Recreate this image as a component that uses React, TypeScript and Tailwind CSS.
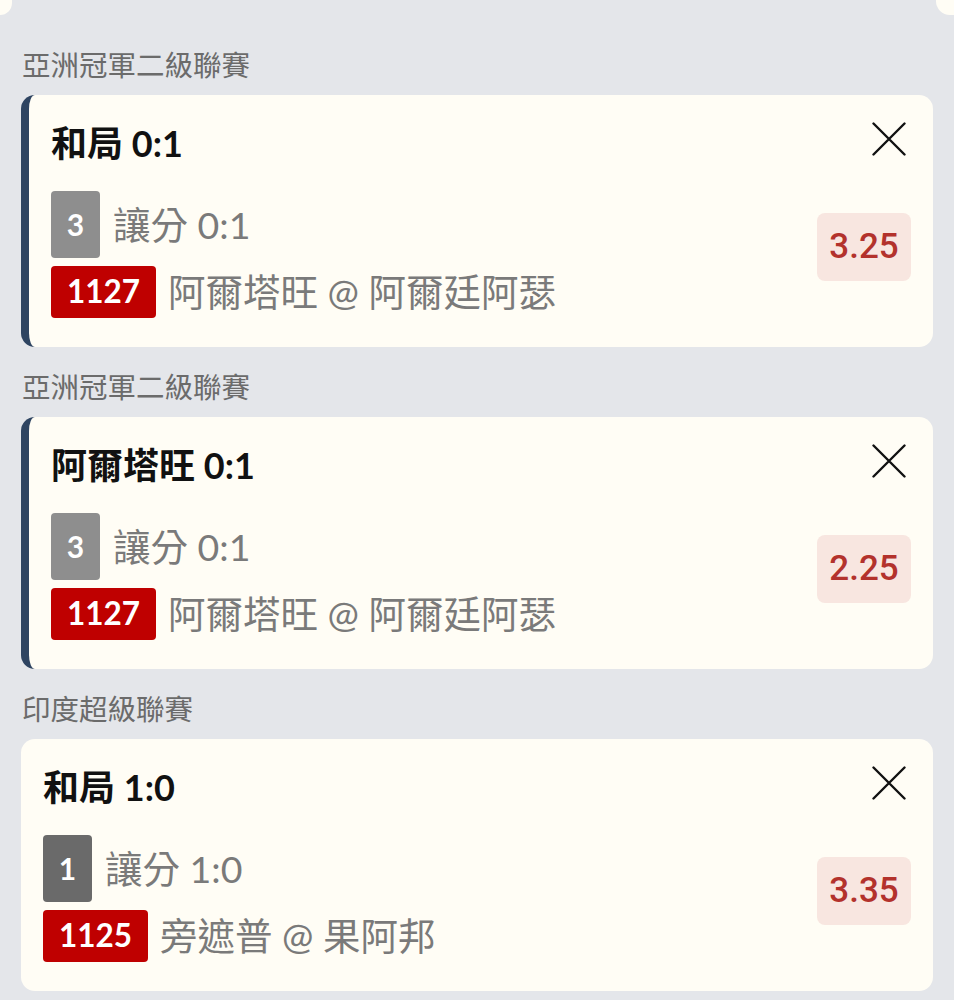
const cjk = { fontFamily: 'Lato, "Noto Sans CJK TC", sans-serif' };
const num = { fontFamily: 'Roboto, "Noto Sans CJK TC", sans-serif' };

type Bet = {
  league: string;
  title: string;
  seq: string;
  seqDark?: boolean;
  handicap: string;
  code: string;
  match: string;
  odds: string;
  active?: boolean;
};

const bets: Bet[] = [
  {
    league: "亞洲冠軍二級聯賽",
    title: "和局 0:1",
    seq: "3",
    handicap: "讓分 0:1",
    code: "1127",
    match: "阿爾塔旺 @ 阿爾廷阿瑟",
    odds: "3.25",
    active: true,
  },
  {
    league: "亞洲冠軍二級聯賽",
    title: "阿爾塔旺 0:1",
    seq: "3",
    handicap: "讓分 0:1",
    code: "1127",
    match: "阿爾塔旺 @ 阿爾廷阿瑟",
    odds: "2.25",
    active: true,
  },
  {
    league: "印度超級聯賽",
    title: "和局 1:0",
    seq: "1",
    seqDark: true,
    handicap: "讓分 1:0",
    code: "1125",
    match: "旁遮普 @ 果阿邦",
    odds: "3.35",
  },
];

function CloseIcon() {
  return (
    <svg width="34" height="34" viewBox="0 0 34 34" fill="none">
      <path d="M1.5 1.5L32.5 32.5M32.5 1.5L1.5 32.5" stroke="#111" strokeWidth="2.4" strokeLinecap="round" />
    </svg>
  );
}

function BetCard({ bet }: { bet: Bet }) {
  return (
    <div>
      <div className="text-[28.5px] leading-[36px] text-[#6b6b6b] mt-[22px] mb-[12px] pl-[1px]" style={cjk}>
        {bet.league}
      </div>
      <div
        className={`bg-[#fffdf5] rounded-[14px] pt-[28px] pb-[29px] pr-[22px] ${
          bet.active ? "border-l-[8px] border-[#2e4461] pl-[22px]" : "pl-[22px]"
        }`}
      >
        <div className="flex items-center justify-between h-[40px]">
          <div className="text-[36px] leading-[40px] font-bold text-[#111]" style={cjk}>
            {bet.title}
          </div>
          <div className="mr-[5px] mt-[-8px]">
            <CloseIcon />
          </div>
        </div>
        <div className="flex items-start justify-between mt-[28px]">
          <div className="flex flex-col gap-[8px]">
            <div className="flex items-center gap-[13px]">
              <div
                className={`w-[49px] h-[67px] rounded-[4px] flex items-center justify-center text-white text-[30px] font-bold ${
                  bet.seqDark ? "bg-[#6a6a6a]" : "bg-[#8e8e8e]"
                }`}
                style={cjk}
              >
                {bet.seq}
              </div>
              <div className="text-[37.5px] leading-[40px] text-[#7a7a7a]" style={cjk}>
                {bet.handicap}
              </div>
            </div>
            <div className="flex items-center gap-[12px]">
              <div
                className="w-[105px] h-[52px] rounded-[4px] bg-[#bf0000] flex items-center justify-center text-white text-[31.5px] font-bold"
                style={cjk}
              >
                {bet.code}
              </div>
              <div className="text-[37.5px] leading-[40px] text-[#7a7a7a]" style={cjk}>
                {bet.match}
              </div>
            </div>
          </div>
          <div
            className="mt-[22px] w-[94px] h-[68px] rounded-[8px] bg-[#f8e6e0] flex items-center justify-center text-[#b3322c] text-[35px] font-medium"
            style={num}
          >
            {bet.odds}
          </div>
        </div>
      </div>
    </div>
  );
}

export default function App() {
  return (
    <div className="w-[954px] h-[1000px] bg-[#e4e6ea] overflow-hidden">
      {/* 이전 카드 끝부분 */}
      <div className="flex justify-between h-[15px]">
        <div className="w-[12px] bg-[#fffdf5] rounded-br-[14px]" />
        <div className="w-[18px] bg-[#fffdf5] rounded-bl-[14px]" />
      </div>
      <div className="px-[21px] pt-[10px]">
        {bets.map((b, i) => (
          <BetCard key={i} bet={b} />
        ))}
      </div>
    </div>
  );
}
